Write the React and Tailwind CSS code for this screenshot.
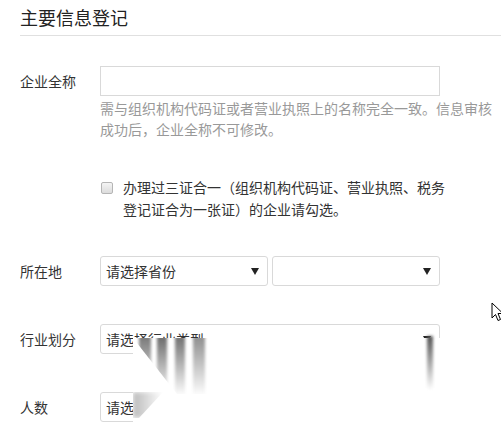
import React from "react";

const font = { fontFamily: '"Noto Sans CJK SC", "Noto Sans", sans-serif' };

const Label = ({ children }) => (
  <div className="w-[80px] shrink-0 text-[14px] text-[#333]">{children}</div>
);

const Select = ({ text, className }) => (
  <div className={`flex h-[30px] items-center justify-between rounded-[3px] border border-[#d9d9d9] bg-white pl-[5px] pr-[8px] text-[14px] text-[#333] ${className}`}>
    <span>{text}</span>
    <svg width="8" height="7" viewBox="0 0 8 7">
      <path d="M0 0 L8 0 L4 7 Z" fill="#222" />
    </svg>
  </div>
);

// trailing streak of the smeared page region
const Streak = ({ left, top, width, height, from }) => (
  <div
    className="absolute blur-[1.5px]"
    style={{ left, top, width, height, background: `linear-gradient(to bottom, ${from}, #ffffff)` }}
  />
);

const Cursor = () => (
  <svg className="absolute left-[491px] top-[302px]" width="14" height="21" viewBox="0 0 14 21">
    <path d="M1 1 L1 16 L4.5 12.5 L7 18.5 L9.5 17.5 L7 11.5 L12 11.5 Z" fill="#fff" stroke="#000" strokeWidth="1" strokeLinejoin="miter" />
  </svg>
);

export default function App() {
  return (
    <div className="relative h-[441px] w-[501px] overflow-hidden bg-white" style={font}>
      <div className="pl-[20px]">
        <div className="border-b border-[#e0e0e0] pt-[4px] pb-[5px] text-[18px] leading-[26px] text-[#222]">
          主要信息登记
        </div>

        <div className="mt-[30px] flex items-center">
          <Label>企业全称</Label>
          <div className="h-[30px] w-[340px] border border-[#d9d9d9]" />
        </div>
        <div className="mt-[2px] pl-[80px] text-[14px] leading-[21px] text-[#999]">
          需与组织机构代码证或者营业执照上的名称完全一致。信息审核
          <br />
          成功后，企业全称不可修改。
        </div>

        <div className="mt-[36px] flex pl-[81px]">
          <div className="mt-[6px] h-[12px] w-[12px] shrink-0 rounded-[2px] border border-[#b5b5b5] bg-gradient-to-b from-[#f4f4f4] to-[#dcdcdc]" />
          <div className="ml-[10px] text-[14px] leading-[22px] text-[#333]">
            办理过三证合一（组织机构代码证、营业执照、税务
            <br />
            登记证合为一张证）的企业请勾选。
          </div>
        </div>

        <div className="mt-[36px] flex items-center">
          <Label>所在地</Label>
          <Select text="请选择省份" className="w-[168px]" />
          <Select text="" className="ml-[4px] w-[168px]" />
        </div>

        <div className="mt-[38px] flex items-center">
          <Label>行业划分</Label>
          <Select text="请选择行业类型" className="w-[340px]" />
        </div>

        <div className="mt-[38px] flex items-center">
          <Label>人数</Label>
          <Select text="请选择人数" className="w-[340px]" />
        </div>
      </div>

      {/* smeared area over the lower selects */}
      <div className="absolute left-[133px] top-[338px] h-[103px] w-[368px] bg-white">
        <div className="absolute left-0 top-0 h-[56px] w-[80px] [clip-path:polygon(0_0,100%_0,100%_100%,55%_100%)]">
          <Streak left={6} top={-2} width={12} height={60} from="#777" />
          <Streak left={24} top={-2} width={10} height={60} from="#6a6a6a" />
          <Streak left={42} top={-2} width={10} height={60} from="#707070" />
          <Streak left={60} top={-2} width={12} height={60} from="#8d8d8d" />
        </div>
        <Streak left={294} top={-2} width={6} height={54} from="#555" />
        <div className="absolute left-0 top-[54px] h-[26px] w-[30px] bg-gradient-to-r from-[#bbb] to-white blur-[2px] [clip-path:polygon(0_0,100%_0,20%_100%,0_100%)]" />
      </div>

      <Cursor />
    </div>
  );
}
